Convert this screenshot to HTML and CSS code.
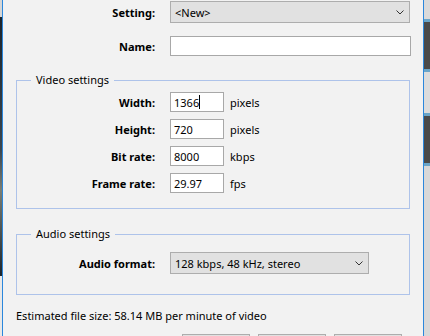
FILE: index.html
```html
<!DOCTYPE html>
<html lang="en">
<head>
  <meta charset="UTF-8">
  <title>Render settings</title>
  <link rel="stylesheet" href="styles.css">
</head>
<body>
<div class="desktop">
  <div class="edge-left"></div>

  <div class="dialog">
    <div class="form-grid top-grid">
      <label class="field-label">Setting:</label>
      <div class="combo combo-wide">
        <span>&lt;New&gt;</span>
        <svg class="chevron" width="8" height="5" viewBox="0 0 8 5"><path d="M0.5 0.5 L4 4 L7.5 0.5" fill="none" stroke="#333" stroke-width="1"/></svg>
      </div>

      <label class="field-label">Name:</label>
      <input class="text-box name-box" type="text" value="">
    </div>

    <fieldset class="group video-group">
      <legend>Video settings</legend>
      <div class="form-grid">
        <label class="field-label">Width:</label>
        <div class="field-line"><span class="text-box small-box">1366<span class="caret"></span></span><span class="unit">pixels</span></div>

        <label class="field-label">Height:</label>
        <div class="field-line"><span class="text-box small-box">720</span><span class="unit">pixels</span></div>

        <label class="field-label">Bit rate:</label>
        <div class="field-line"><span class="text-box small-box">8000</span><span class="unit">kbps</span></div>

        <label class="field-label">Frame rate:</label>
        <div class="field-line"><span class="text-box small-box">29.97</span><span class="unit">fps</span></div>
      </div>
    </fieldset>

    <fieldset class="group audio-group">
      <legend>Audio settings</legend>
      <div class="form-grid">
        <label class="field-label">Audio format:</label>
        <div class="combo combo-audio">
          <span>128 kbps, 48 kHz, stereo</span>
          <svg class="chevron" width="8" height="5" viewBox="0 0 8 5"><path d="M0.5 0.5 L4 4 L7.5 0.5" fill="none" stroke="#333" stroke-width="1"/></svg>
        </div>
      </div>
    </fieldset>

    <p class="estimate">Estimated file size: 58.14 MB per minute of video</p>

    <!-- only the top edge of the dialog buttons is visible -->
    <div class="buttons">
      <button class="btn" aria-label="OK"></button>
      <button class="btn" aria-label="Cancel"></button>
      <button class="btn" aria-label="Help"></button>
    </div>
  </div>

  <div class="edge-right"></div>
</div>
</body>
</html>
```

FILE: styles.css
```css
body {
  margin: 0;
  font-family: "Noto Sans", sans-serif;
  font-size: 11px;
  color: #000;
  background-color: #f2f2f2;
  overflow: hidden;
}
.desktop {
  display: flex;
  height: 336px;
  width: 430px;
  overflow: hidden;
}
.edge-left {
  width: 2px;
  background: linear-gradient(#d6d6d6 0, #d6d6d6 17px, #1b242c 17px, #3a4650 150px, #7b7e74 190px, #1b242c 276px, #e8e8e8 276px);
}
.edge-right {
  width: 6px;
  background: linear-gradient(#dadada 0, #dadada 19px, #6aa5c8 19px, #6aa5c8 22px, #4a4a4a 22px, #4a4a4a 69px, #6aa5c8 69px, #6aa5c8 72px, #dcdcdc 72px, #dcdcdc 113px, #6aa5c8 113px, #6aa5c8 116px, #4a4a4a 116px, #4a4a4a 163px, #6aa5c8 163px, #6aa5c8 166px, #d8d8d8 166px);
}
.dialog {
  width: 422px;
  border-left: 1px solid #2b87dc;
  border-right: 1px solid #2b87dc;
  background-color: #f2f2f2;
  padding: 1px 13px 0 13px;
  box-sizing: border-box;
}
.form-grid {
  display: grid;
  grid-template-columns: 138px 1fr;
  column-gap: 15px;
  row-gap: 7px;
  align-items: center;
}
.top-grid {
  grid-template-columns: 139px 1fr;
  row-gap: 13px;
}
.field-label {
  font-weight: bold;
  text-align: right;
}
.combo {
  display: flex;
  align-items: center;
  justify-content: space-between;
  height: 22px;
  box-sizing: border-box;
  border: 1px solid #adadad;
  background-color: #e1e1e1;
  padding: 0 5px 0 4px;
}
.combo-wide {
  width: 240px;
}
.combo-audio {
  width: 199px;
}
.text-box {
  height: 20px;
  box-sizing: border-box;
  border: 1px solid #a8a8a8;
  background-color: #fff;
  font: inherit;
  padding: 0 3px;
}
.name-box {
  width: 241px;
  outline: none;
}
.field-line {
  display: flex;
  align-items: center;
}
.small-box {
  display: flex;
  align-items: center;
  width: 54px;
}
.caret {
  display: inline-block;
  width: 1px;
  height: 14px;
  background-color: #000;
}
.unit {
  margin-left: 6px;
}
.group {
  margin: 16px 0 0 0;
  padding: 4px 0 15px 0;
  border: 1px solid #aec3ea;
  min-width: 0;
}
.group legend {
  margin-left: 14px;
  padding: 0 5px;
  line-height: 16px;
}
.audio-group {
  margin-top: 17px;
  padding: 10px 0 20px 0;
}
.estimate {
  margin: 13px 0 0 0;
  line-height: 16px;
}
.buttons {
  display: flex;
  gap: 8px;
  margin: 10px 0 0 166px;
}
.btn {
  width: 68px;
  height: 23px;
  border: 1px solid #adadad;
  background-color: #e1e1e1;
  padding: 0;
}
```
